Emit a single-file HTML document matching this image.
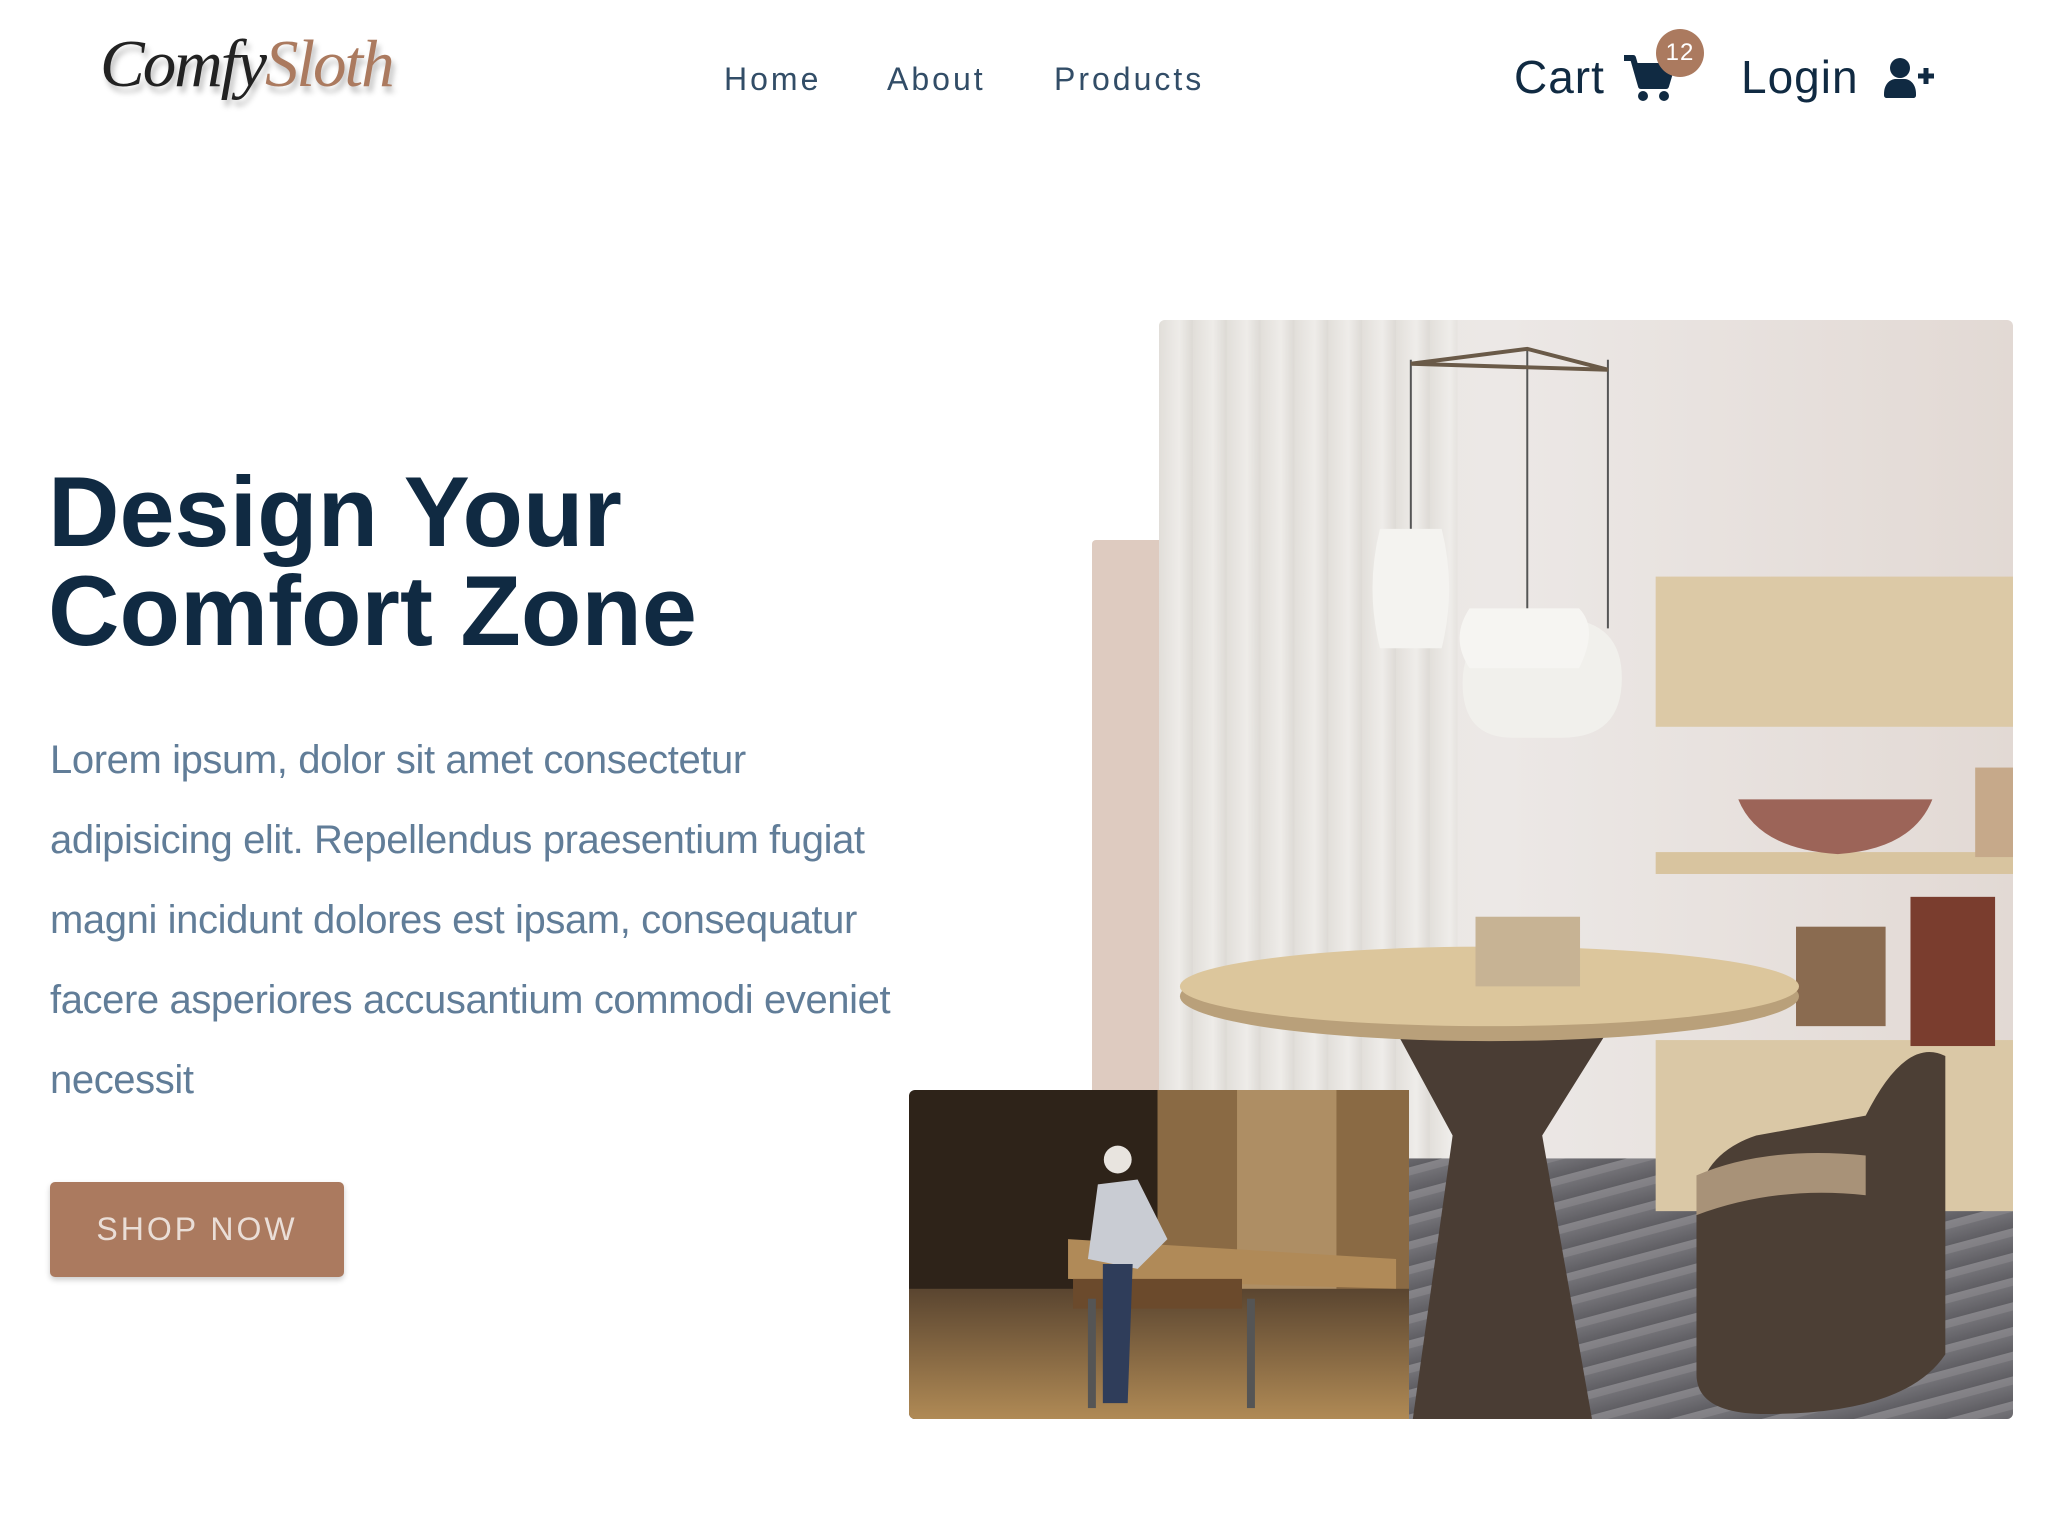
<!DOCTYPE html>
<html><head><meta charset="utf-8"><style>
*{margin:0;padding:0;box-sizing:border-box}
body{width:2064px;height:1530px;background:#fff;position:relative;overflow:hidden;font-family:"Liberation Sans",sans-serif;color:#102a42}
.abs{position:absolute}
.logo{left:100px;top:26px;font-family:"Liberation Serif",serif;font-style:italic;font-size:67px;letter-spacing:-2px;text-shadow:3px 6px 6px rgba(0,0,0,.25)}
.nav{top:61px;font-size:32px;letter-spacing:3px;color:#324d67}
.big{font-size:46px;color:#102a42;letter-spacing:1px}
h1{position:absolute;left:48px;top:462px;font-size:99px;line-height:99px;font-weight:bold;color:#102a42;letter-spacing:0}
p.t{position:absolute;left:50px;top:720px;white-space:nowrap;font-size:40px;line-height:80px;color:#617d98;letter-spacing:-0.4px}
.btn{left:50px;top:1182px;width:294px;height:95px;background:#ab7a5f;border-radius:5px;box-shadow:0 3px 6px rgba(0,0,0,.2);color:#eaded7;font-size:32px;letter-spacing:3px;text-align:center;line-height:95px}
</style></head><body>
<div class="abs logo"><span style="color:#222">Comfy</span><span style="color:#ab7a5f">Sloth</span></div>
<div class="abs nav" style="left:724px">Home</div>
<div class="abs nav" style="left:887px">About</div>
<div class="abs nav" style="left:1054px">Products</div>
<div class="abs big" style="left:1514px;top:50px">Cart</div>
<svg class="abs" style="left:1622px;top:54px" width="52" height="48" viewBox="0 0 52 48"><path d="M2 4h9l8 28h25l6-20H14" fill="none" stroke="#102a42" stroke-width="6" stroke-linejoin="round"/><path d="M14 12h36l-6 20H19z" fill="#102a42"/><circle cx="21" cy="42" r="5" fill="#102a42"/><circle cx="42" cy="42" r="5" fill="#102a42"/></svg>
<div class="abs" style="left:1656px;top:29px;width:48px;height:48px;border-radius:50%;background:#ab7a5f;color:#fff;font-size:24px;text-align:center;line-height:48px;letter-spacing:1px">12</div>
<div class="abs big" style="left:1741px;top:50px">Login</div>
<svg class="abs" style="left:1884px;top:58px" width="50" height="40" viewBox="0 0 50 40"><circle cx="16" cy="10" r="10" fill="#102a42"/><path d="M0 36c0-10 6-15 12-15h8c6 0 12 5 12 15v1c0 2-1 3-3 3H3c-2 0-3-1-3-3z" fill="#102a42"/><path d="M42 10v16M34 18h16" stroke="#102a42" stroke-width="5"/></svg>

<h1>Design Your<br>Comfort Zone</h1>
<p class="t">Lorem ipsum, dolor sit amet consectetur<br>adipisicing elit. Repellendus praesentium fugiat<br>magni incidunt dolores est ipsam, consequatur<br>facere asperiores accusantium commodi eveniet<br>necessit</p>
<div class="abs btn">SHOP NOW</div>

<div class="abs" style="left:1092px;top:540px;width:80px;height:560px;background:#decbc0;border-radius:4px 0 0 0"></div>
<svg class="abs" style="left:1159px;top:320px;border-radius:6px" width="854" height="1099" viewBox="0 0 858 1105" preserveAspectRatio="none">
<defs>
<linearGradient id="w" x1="0" x2="1"><stop offset="0" stop-color="#e6e3de"/><stop offset=".4" stop-color="#ece8e6"/><stop offset="1" stop-color="#e2d9d4"/></linearGradient>
<linearGradient id="sg" x1="0" x2="1"><stop offset="0" stop-color="#e0ddd8"/><stop offset=".6" stop-color="#f0eeeb"/><stop offset="1" stop-color="#dad7d2"/></linearGradient>
<pattern id="st" width="34" height="10" patternUnits="userSpaceOnUse"><rect width="34" height="10" fill="url(#sg)"/></pattern>
<linearGradient id="cp" x1="0" y1="0" x2="0" y2="1"><stop offset="0" stop-color="#7c7b80"/><stop offset="1" stop-color="#5f5e63"/></linearGradient>
<pattern id="cs" width="60" height="24" patternUnits="userSpaceOnUse" patternTransform="rotate(-15)"><rect width="60" height="24" fill="url(#cp)"/><rect width="60" height="8" fill="#8f8e92" opacity=".5"/></pattern>
</defs>
<rect width="858" height="1105" fill="url(#w)"/>
<rect width="300" height="900" fill="url(#st)" opacity=".8"/>
<rect x="0" y="843" width="858" height="262" fill="url(#cs)"/>
<rect x="499" y="258" width="359" height="151" fill="#dcc9a6"/>
<rect x="499" y="535" width="359" height="22" fill="#d8c49f"/>
<rect x="820" y="450" width="38" height="90" fill="#c6a98a"/>
<path d="M582 482h195q-20 50-95 55q-80-5-100-55z" fill="#9c6458"/>
<rect x="499" y="724" width="359" height="172" fill="#dac8a6"/>
<rect x="640" y="610" width="90" height="100" fill="#8a6b50"/>
<rect x="755" y="580" width="85" height="150" fill="#7a3d2e"/>
<path d="M230 700h230l-75 120 50 285h-180l40-285z" fill="#4a3d34"/>
<ellipse cx="332" cy="680" rx="311" ry="45" fill="#b9a07a"/>
<ellipse cx="332" cy="670" rx="311" ry="40" fill="#dcc69c"/>
<rect x="318" y="600" width="105" height="70" fill="#c7b394"/>
<path d="M540 900q0-60 60-80l110-20q40-80 80-60v300q-40 60-180 60q-70 0-70-40z" fill="#4c3f35"/>
<path d="M540 900q80-30 170-20v-40q-100-10-170 20z" fill="#a89278"/>
<line x1="253" y1="40" x2="253" y2="210" stroke="#555" stroke-width="2"/>
<line x1="370" y1="30" x2="370" y2="290" stroke="#555" stroke-width="2"/>
<line x1="451" y1="40" x2="451" y2="310" stroke="#555" stroke-width="2"/>
<path d="M253 44l117-15 81 21z" fill="none" stroke="#6a5a48" stroke-width="4"/>
<path d="M222 210h62q15 60 0 120h-62q-15-60 0-120z" fill="#f4f3f0"/>
<path d="M400 300q65 0 65 60t-60 60h-50q-50 0-50-55t60-65z" fill="#f1f0ec"/>
<path d="M312 290h110q20 20 0 60h-110q-20-30 0-60z" fill="#f6f5f2"/>
</svg>
<svg class="abs" style="left:909px;top:1090px;border-radius:6px 0 0 6px" width="500" height="329" viewBox="0 0 503 331" preserveAspectRatio="none">
<defs><linearGradient id="fl" x1="0" y1="0" x2="0" y2="1"><stop offset="0" stop-color="#5a4530"/><stop offset="1" stop-color="#b08a55"/></linearGradient></defs>
<rect width="503" height="331" fill="#2e2319"/>
<rect x="250" width="253" height="250" fill="#8a6a44"/>
<rect x="330" y="0" width="100" height="220" fill="#c7a77a" opacity=".6"/>
<rect x="0" y="200" width="503" height="131" fill="url(#fl)"/>
<path d="M160 150l330 20v30l-330-10z" fill="#b08a58"/>
<path d="M165 190h170v30h-170z" fill="#6b4a2c"/>
<rect x="180" y="210" width="8" height="110" fill="#555"/>
<rect x="340" y="210" width="8" height="110" fill="#555"/>
<circle cx="210" cy="70" r="14" fill="#e8e4df"/>
<path d="M190 95l40 -5 30 60-20 20-10 10-50-10z" fill="#c9ccd3"/>
<path d="M195 175h30l-5 140h-25z" fill="#2f3d5a"/>
</svg>
</body></html>
